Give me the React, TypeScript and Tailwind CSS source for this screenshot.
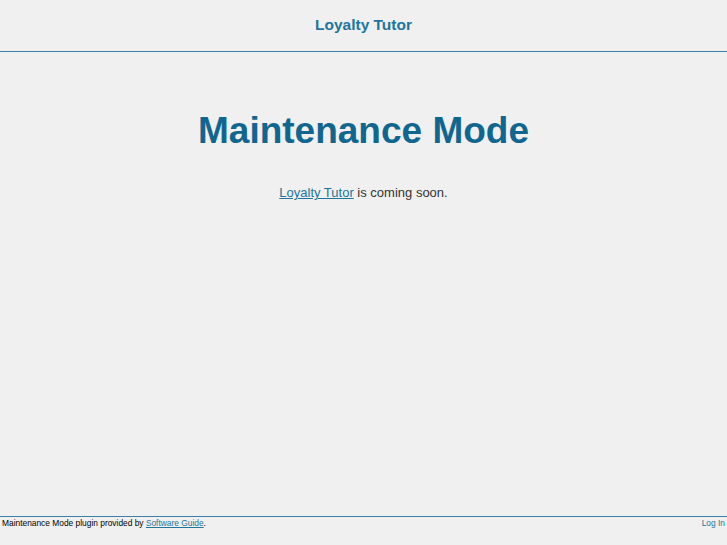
export default function App() {
  return (
    <div className="flex min-h-screen flex-col bg-[#f0f0f0] font-['Liberation_Sans',Arial,sans-serif]">
      <header className="flex h-[52px] items-center justify-center border-b border-[#3d7fa6] pb-[2px]">
        <a href="#" className="text-[15.5px] font-bold text-[#21759b] no-underline">
          Loyalty Tutor
        </a>
      </header>

      <main className="flex flex-col items-center pt-[55px]">
        <h1 className="text-[37px] font-bold leading-[48px] text-[#11668f]">Maintenance Mode</h1>
        <p className="mt-[30px] text-[13px] leading-[16px] text-[#333333]">
          <a href="#" className="text-[#21759b] underline">
            Loyalty Tutor
          </a>{' '}
          is coming soon.
        </p>
      </main>

      <footer className="mt-auto flex h-[29px] items-start justify-between border-t border-[#3d7fa6] px-[2px] pt-px text-[8.4px] leading-[11px]">
        <p className="text-black">
          Maintenance Mode plugin provided by{' '}
          <a href="#" className="text-[#21759b] underline">
            Software Guide
          </a>
          .
        </p>
        <a href="#" className="text-[#21759b] no-underline">
          Log In
        </a>
      </footer>
    </div>
  );
}
